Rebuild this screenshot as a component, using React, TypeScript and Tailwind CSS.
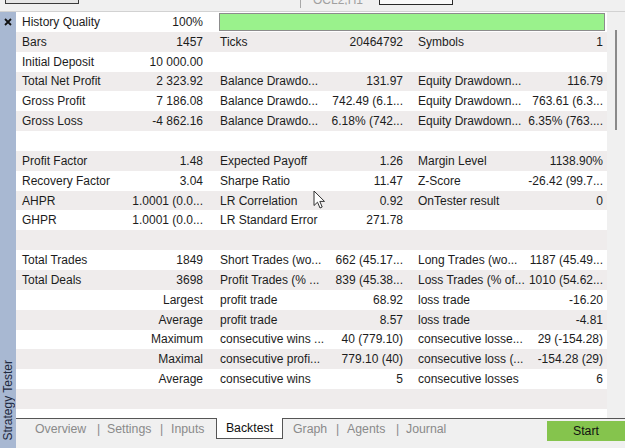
import React from "react";

type Row = string[] | null;

const rows: Row[] = [
  ["History Quality", "100%", "BAR"],
  ["Bars", "1457", "Ticks", "20464792", "Symbols", "1"],
  ["Initial Deposit", "10 000.00", "", "", "", ""],
  ["Total Net Profit", "2 323.92", "Balance Drawdo...", "131.97", "Equity Drawdown...", "116.79"],
  ["Gross Profit", "7 186.08", "Balance Drawdo...", "742.49 (6.1...", "Equity Drawdown...", "763.61 (6.3..."],
  ["Gross Loss", "-4 862.16", "Balance Drawdo...", "6.18% (742...", "Equity Drawdown...", "6.35% (763...."],
  null,
  ["Profit Factor", "1.48", "Expected Payoff", "1.26", "Margin Level", "1138.90%"],
  ["Recovery Factor", "3.04", "Sharpe Ratio", "11.47", "Z-Score", "-26.42 (99.7..."],
  ["AHPR", "1.0001 (0.0...", "LR Correlation", "0.92", "OnTester result", "0"],
  ["GHPR", "1.0001 (0.0...", "LR Standard Error", "271.78", "", ""],
  null,
  ["Total Trades", "1849", "Short Trades (wo...", "662 (45.17...", "Long Trades (wo...", "1187 (45.49..."],
  ["Total Deals", "3698", "Profit Trades (% ...", "839 (45.38...", "Loss Trades (% of...", "1010 (54.62..."],
  ["", "Largest", "profit trade", "68.92", "loss trade", "-16.20"],
  ["", "Average", "profit trade", "8.57", "loss trade", "-4.81"],
  ["", "Maximum", "consecutive wins ...", "40 (779.10)", "consecutive losse...", "29 (-154.28)"],
  ["", "Maximal", "consecutive profi...", "779.10 (40)", "consecutive loss (...", "-154.28 (29)"],
  ["", "Average", "consecutive wins", "5", "consecutive losses", "6"],
  null,
];

function TableRow({ row, i }: { row: Row; i: number }) {
  const bg = i % 2 === 1 ? "bg-[#efecec]" : "bg-white";
  if (!row) return <div className={`h-[19.85px] ${bg}`} />;
  return (
    <div className={`h-[19.85px] ${bg} flex items-center pl-[6px] whitespace-nowrap`}>
      <div className="w-[103px]">{row[0]}</div>
      <div className="w-[78px] text-right">{row[1]}</div>
      {row[2] === "BAR" ? (
        <div className="ml-[16px] w-[386px] h-[18px] bg-[#9af28c] border border-[#8c8c8c]" />
      ) : (
        <>
          <div className="ml-[17px] w-[103px]">{row[2]}</div>
          <div className="w-[80px] text-right">{row[3]}</div>
          <div className="ml-[15px] w-[105px]">{row[4]}</div>
          <div className="w-[80px] text-right">{row[5]}</div>
        </>
      )}
    </div>
  );
}

export default function App() {
  return (
    <div
      className="w-[625px] h-[448px] overflow-hidden bg-[#f0f0f0] flex flex-col text-[12px] text-[#1c1c1c]"
      style={{ fontFamily: '"Liberation Sans", Arial, sans-serif' }}
    >
      {/* top toolbar remnant */}
      <div className="h-[12px] border-b border-[#d2d2d2] flex items-start overflow-hidden">
        <div className="ml-[5px] w-[74px] h-[4px] border-x border-b border-[#3a3a3a] bg-[#e6e6e6]" />
        <div className="ml-[221px] w-px h-[8px] bg-[#a8a8a8]" />
        <div className="ml-[12px] w-[55px] h-[5px] overflow-hidden">
          <div className="-mt-[9px] text-[#a0a0a0]">OCL2,H1</div>
        </div>
        <div className="ml-[11px] w-[74px] h-[5px] border-x border-b border-[#2a2a2a] bg-[#fafafa]" />
      </div>

      <div className="flex flex-1">
        {/* left strip */}
        <div className="w-[16px] bg-[#a8b8d2] flex flex-col items-center justify-between pt-[6px] pb-[8px]">
          <svg width="8" height="8" viewBox="0 0 8 8">
            <path d="M1 1 L7 7 M7 1 L1 7" stroke="#111" strokeWidth="1.8" />
          </svg>
          <div className="[writing-mode:vertical-rl] rotate-180 text-[12px] text-[#1f2a40] leading-none">
            Strategy Tester
          </div>
        </div>

        <div className="flex-1 flex flex-col">
          <div className="h-[406px] flex">
            <div className="relative w-[591px] bg-white">
              {rows.map((r, i) => (
                <TableRow key={i} row={r} i={i} />
              ))}
              <svg
                className="absolute left-[297px] top-[178px]"
                width="13"
                height="19"
                viewBox="0 0 13 19"
              >
                <path
                  d="M1 1 L1 15.5 L4.5 12.2 L7 18 L9.2 17 L6.8 11.4 L11.5 11.4 Z"
                  fill="#fff"
                  stroke="#333"
                  strokeWidth="1"
                  strokeLinejoin="round"
                />
              </svg>
            </div>
            <div className="flex-1 bg-[#f0f0f0] flex justify-center">
              <div className="mt-[18px] w-[2px] h-[100px] bg-[#8a8a8a]" />
            </div>
          </div>

          {/* tabs */}
          <div className="h-[30px] border-t border-[#555] flex items-start text-[12.3px]">
            <div className="w-[19px]" />
            <div className="w-[62px] h-[20px] flex items-center text-[#8a8a8a]">Overview</div>
            <div className="w-[10px] h-[20px] flex items-center text-[#8a8a8a]">|</div>
            <div className="w-[53px] h-[20px] flex items-center text-[#8a8a8a]">Settings</div>
            <div className="w-[11px] h-[20px] flex items-center text-[#8a8a8a]">|</div>
            <div className="w-[45px] h-[20px] flex items-center text-[#8a8a8a]">Inputs</div>
            <div className="relative -mt-px w-[67px] h-[21px] bg-white border-x border-b border-[#555] flex items-center justify-center text-[#111]">
              Backtest
            </div>
            <div className="w-[10px]" />
            <div className="w-[43px] h-[20px] flex items-center text-[#8a8a8a]">Graph</div>
            <div className="w-[11px] h-[20px] flex items-center text-[#8a8a8a]">|</div>
            <div className="w-[49px] h-[20px] flex items-center text-[#8a8a8a]">Agents</div>
            <div className="w-[10px] h-[20px] flex items-center text-[#8a8a8a]">|</div>
            <div className="w-[50px] h-[20px] flex items-center text-[#8a8a8a]">Journal</div>
            <div className="flex-1" />
            <div className="mt-[2px] w-[78px] h-[20px] bg-[#85c44d] flex items-center justify-center text-[#111]">
              Start
            </div>
          </div>
        </div>
      </div>
    </div>
  );
}
